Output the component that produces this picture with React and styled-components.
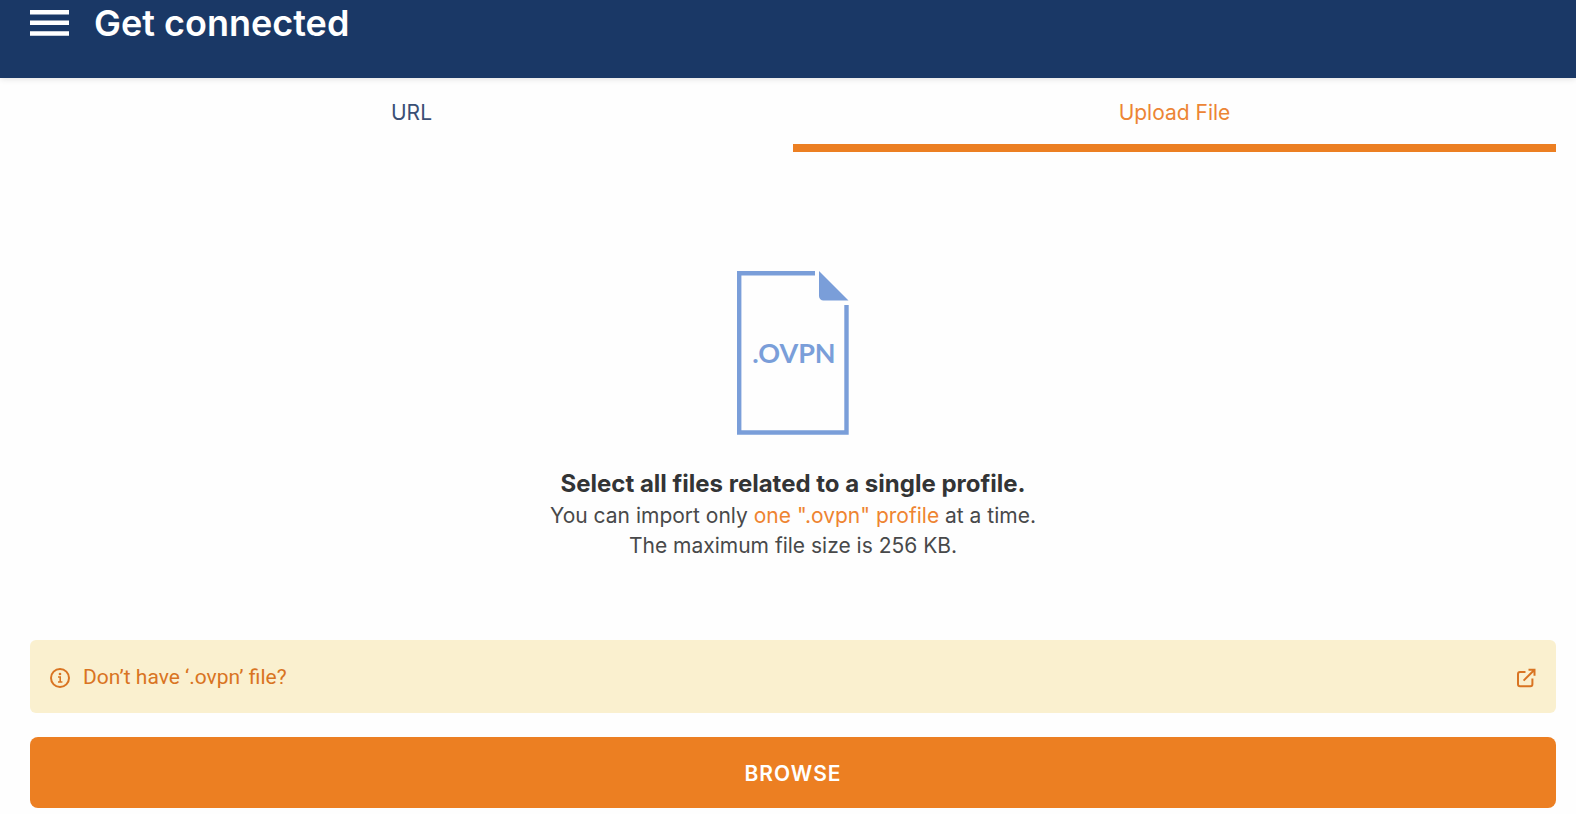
import React, { useState } from 'react';
import styled, { createGlobalStyle } from 'styled-components';

const GlobalStyle = createGlobalStyle`
  * {
    box-sizing: border-box;
  }

  body {
    margin: 0;
    background: #fefefe;
    font-family: Inter, sans-serif;
  }

  button {
    border: none;
    padding: 0;
    font-family: inherit;
    cursor: pointer;
  }
`;

const Header = styled.header`
  display: flex;
  align-items: center;
  gap: 25px;
  padding: 0 30px 32px;
  background: #1a3866;
  box-shadow: 0 1px 6px rgba(0, 0, 0, 0.12);
`;

const MenuButton = styled.button`
  display: flex;
  background: none;
`;

const Title = styled.h1`
  margin: 0;
  color: #fff;
  font-size: 36px;
  font-weight: 600;
  line-height: 46px;
`;

const Content = styled.main`
  padding: 0 20px 6px 30px;
`;

const Tabs = styled.div`
  display: grid;
  grid-template-columns: 1fr 1fr;
`;

const Tab = styled.button`
  padding: 21px 0 17px;
  background: none;
  border-bottom: 8px solid ${({ $active }) => ($active ? '#ec7f22' : 'transparent')};
  color: ${({ $active }) => ($active ? '#ec8535' : '#3a4f75')};
  font-size: 21px;
  font-weight: 400;
  line-height: 28px;
`;

const Panel = styled.section`
  display: flex;
  flex-direction: column;
  align-items: center;
  padding: 119px 0 79px;
  color: #48494a;
  text-align: center;
`;

const PanelTitle = styled.h2`
  margin: 32px 0 0;
  color: #333435;
  font-size: 24px;
  font-weight: 700;
  line-height: 34px;
`;

const PanelText = styled.p`
  margin: 0;
  font-size: 21px;
  line-height: 30px;
`;

const Highlight = styled.span`
  color: #ee8431;
`;

const Notice = styled.a`
  display: flex;
  align-items: center;
  gap: 13px;
  padding: 23px 20px 21px;
  border-radius: 6px;
  background: #faf0cf;
  color: #d97422;
  font-family: Roboto, sans-serif;
  font-size: 21px;
  line-height: 29px;
  text-decoration: none;
`;

const NoticeText = styled.span`
  flex: 1;
`;

const BrowseButton = styled.button`
  width: 100%;
  margin-top: 24px;
  padding: 22px 0 20px;
  border-radius: 8px;
  background: #ec7f22;
  color: #fff;
  font-size: 21px;
  font-weight: 600;
  letter-spacing: 1px;
  line-height: 29px;
`;

const FileLabel = styled.text`
  fill: #7a9ed9;
  font-family: Lato, sans-serif;
  font-size: 27px;
  font-weight: 700;
`;

const MenuIcon = () => (
  <svg width="39" height="27" viewBox="0 0 39 27" fill="#fff" aria-hidden="true">
    <path d="M0 0h39v4.6H0zM0 10.5h39v4.6H0zM0 21.2h39v4.6H0z" />
  </svg>
);

const FileIcon = () => (
  <svg width="112" height="164" viewBox="0 0 112 164" aria-hidden="true">
    <path d="M78 2.2H2.2v159.3h107.3V34" fill="none" stroke="#7a9ed9" strokeWidth="4.4" />
    <path d="M82 0l29.5 29.5H86.5a4.5 4.5 0 0 1-4.5-4.5z" fill="#7a9ed9" />
    <FileLabel x="57" y="92" textAnchor="middle">.OVPN</FileLabel>
  </svg>
);

const InfoIcon = () => (
  <svg width="20" height="20" viewBox="0 0 20 20" fill="none" stroke="currentColor" aria-hidden="true">
    <circle cx="10" cy="10" r="9" strokeWidth="2" />
    <path d="M8 9h2.2v5M8 14h4.4" strokeWidth="1.6" />
    <circle cx="10" cy="6" r="1.3" fill="currentColor" stroke="none" />
  </svg>
);

const ExternalIcon = () => (
  <svg width="20" height="20" viewBox="0 0 20 20" fill="none" stroke="currentColor" strokeWidth="2" aria-hidden="true">
    <path d="M9.5 4H4a2 2 0 0 0-2 2v10.2a2 2 0 0 0 2 2h10.4a2 2 0 0 0 2-2V10.5" />
    <path d="M12.5 1.7h6v6M18 2.2L7.6 12.6" />
  </svg>
);

const App = () => {
  const [tab, setTab] = useState('file');

  return (
    <>
      <GlobalStyle />
      <Header>
        <MenuButton aria-label="Menu">
          <MenuIcon />
        </MenuButton>
        <Title>Get connected</Title>
      </Header>
      <Content>
        <Tabs role="tablist">
          <Tab role="tab" aria-selected={tab === 'url'} $active={tab === 'url'} onClick={() => setTab('url')}>
            URL
          </Tab>
          <Tab role="tab" aria-selected={tab === 'file'} $active={tab === 'file'} onClick={() => setTab('file')}>
            Upload File
          </Tab>
        </Tabs>
        <Panel>
          <FileIcon />
          <PanelTitle>Select all files related to a single profile.</PanelTitle>
          <PanelText>
            You can import only <Highlight>one ".ovpn" profile</Highlight> at a time.
          </PanelText>
          <PanelText>The maximum file size is 256 KB.</PanelText>
        </Panel>
        <Notice href="#">
          <InfoIcon />
          <NoticeText>Don’t have ‘.ovpn’ file?</NoticeText>
          <ExternalIcon />
        </Notice>
        <BrowseButton>BROWSE</BrowseButton>
      </Content>
    </>
  );
};

export default App;
